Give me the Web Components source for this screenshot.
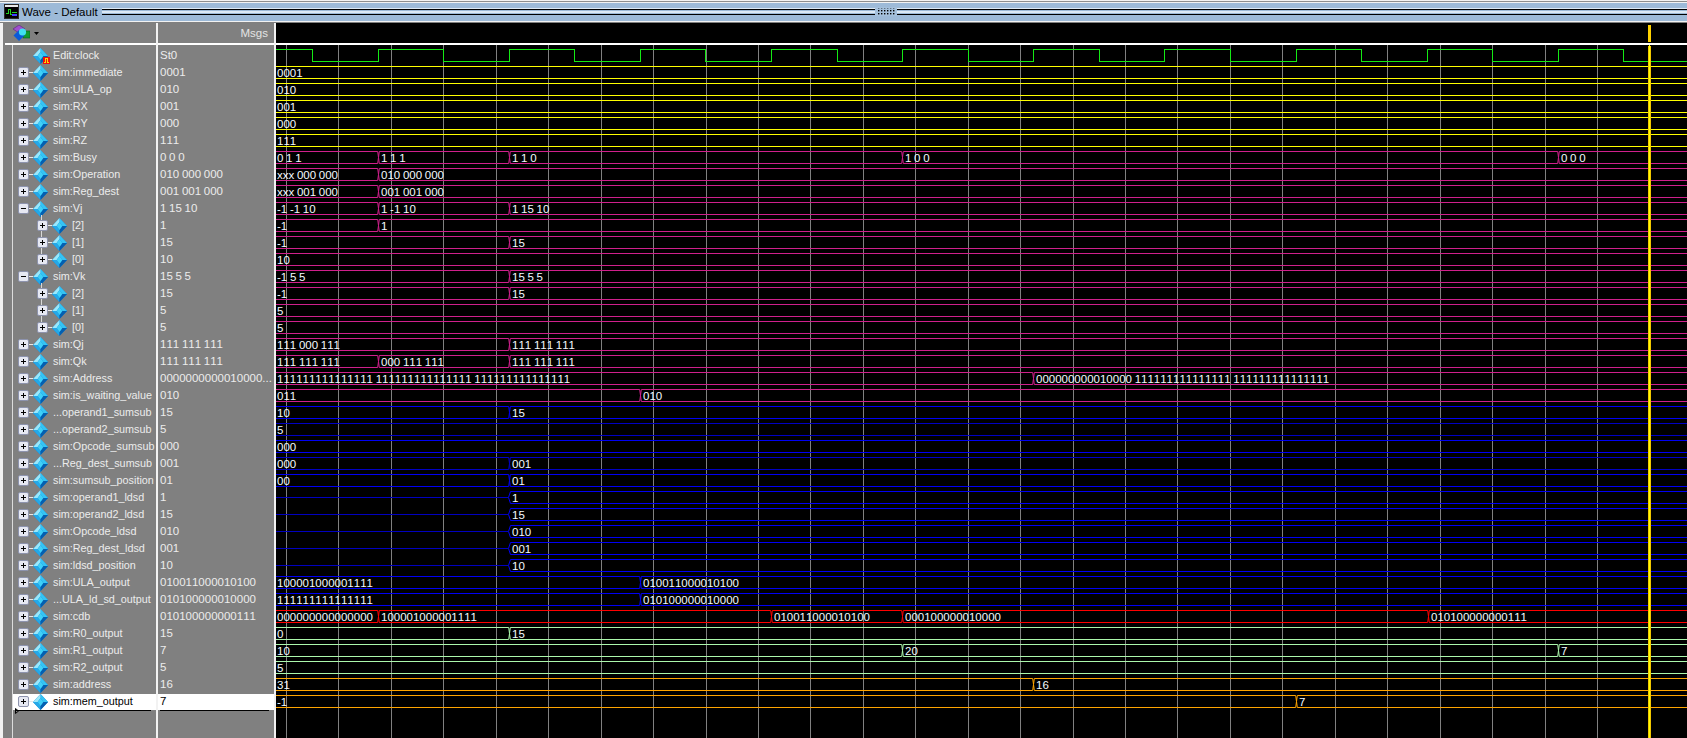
<!DOCTYPE html>
<html>
<head>
<meta charset="utf-8">
<title>Wave - Default</title>
<style>
html, body { margin: 0; height: 738px; overflow: hidden; background: #000; }
body { font: 11.5px "Liberation Sans", Arial, sans-serif; font-kerning: none; }
</style>
</head>
<body>
<wave-window></wave-window>

<script>
const GEM = `<svg class="gem" width="15" height="16" viewBox="0 0 16 16" preserveAspectRatio="none">
  <polygon points="8,0 16,8 8,16 0,8" fill="#0a7fd0"/>
  <polygon points="8,0 16,8 11,8 8,4" fill="#35c4f4"/>
  <polygon points="8,0 8,4 5,8 0,8" fill="#9be8fb"/>
  <polygon points="0,8 5,8 8,12 8,16" fill="#25a8e8"/>
  <polygon points="16,8 11,8 8,12 8,16" fill="#045fb0"/>
  <polygon points="8,4 11,8 8,12 5,8" fill="#3fd0f8"/>
</svg>`;

const titleTemplate = document.createElement('template');
titleTemplate.innerHTML = `
<style>
:host {
  display: flex;
  align-items: center;
  height: 23px;
  box-sizing: border-box;
  border-top: 1px solid #f2f2f2;
  border-bottom: 1px solid #808080;
  background: linear-gradient(#8e8e8e 1px, #f2f2f2 1px, #f2f2f2 2px, #9dbad8 2px, #9dbad8 20px, #f2f2f2 20px);
  padding-left: 4px;
  color: #000;
  font: 11.5px "Liberation Sans", Arial, sans-serif;
}
svg.icon { flex: none; margin-right: 3px; }
span { flex: none; width: 80px; white-space: nowrap; }
.stripes {
  flex: 1;
  height: 7px;
  margin-top: -1px;
  display: flex;
  justify-content: center;
  background: linear-gradient(#dce9f5 1px, #000 1px, #000 2px, #9dbad8 2px, #9dbad8 3px, #dce9f5 3px, #dce9f5 5px, #9dbad8 5px, #9dbad8 6px, #000 6px);
}
.grip { margin-left: -17px; }
</style>
<svg class="icon" width="15" height="15" viewBox="0 0 15 15" shape-rendering="crispEdges">
  <rect width="15" height="15" fill="#2a2a2a"/>
  <rect x="1" y="1" width="13" height="2" fill="#e8e8e8"/>
  <rect x="1" y="3" width="13" height="11" fill="#000"/>
  <path d="M2 9h2V5h2v5h2" fill="none" stroke="#20d020"/>
  <path d="M8 8h5" stroke="#20d020"/>
  <path d="M8 11h5" stroke="#4040ff" stroke-width="2"/>
</svg>
<span><slot></slot></span>
<div class="stripes">
  <svg class="grip" width="22" height="9" viewBox="0 0 22 9" style="margin-top:-1px">
    <defs><pattern id="d" width="3" height="3" patternUnits="userSpaceOnUse"><rect width="1.4" height="1.4" fill="#000"/></pattern></defs>
    <rect width="22" height="9" fill="#a4c0dc"/>
    <rect x="2" y="1" width="19" height="8" fill="url(#d)"/>
  </svg>
</div>`;

customElements.define('title-bar', class extends HTMLElement {
    connectedCallback() {
        this.attachShadow({ mode: 'open' }).appendChild(titleTemplate.content.cloneNode(true));
    }
});

customElements.define('signal-name', class extends HTMLElement {
    connectedCallback() {
        const kind = this.getAttribute('kind') || 'closed';
        const box = kind === 'leaf' ? '' : `
          <svg class="box" width="11" height="11" viewBox="0 0 11 11" shape-rendering="crispEdges">
            <rect x=".5" y=".5" width="10" height="10" rx="1.5" fill="#e6e8f2" stroke="#8d93ad" shape-rendering="auto"/>
            <path d="M3 5.5h5" stroke="#000"/>
            ${kind === 'open' ? '' : '<path d="M5.5 3v5" stroke="#000"/>'}
          </svg><i></i>`;
        this.attachShadow({ mode: 'open' }).innerHTML = `
<style>
:host {
  display: flex;
  align-items: center;
  position: relative;
  height: 17px;
  padding-left: 5px;
  color: #ececec;
  font-size: 10.8px;
  white-space: nowrap;
}
:host([child]) { padding-left: 24px; }
:host([kind=leaf]) { padding-left: 20px; }
:host([selected]) { background: linear-gradient(#808080 1px, #fff 1px); color: #000; }
i { width: 4px; height: 1px; background: #e8e8e8; flex: none; }
.box, .gem { flex: none; }
.gem { margin-right: 5px; }
b { font: inherit; flex: none; position: relative; top: -1px; }
:host([child])::before {
  content: "";
  position: absolute;
  left: 28px;
  top: -2px;
  height: 19px;
  width: 1px;
  background: #d8d8d8;
}
:host([last])::before { height: 10px; }
.box { position: relative; }
.badge { position: absolute; left: 30px; top: 10px; }
</style>
${box}${GEM}<b><slot></slot></b>
${kind === 'leaf' ? `<svg class="badge" width="7" height="7" viewBox="0 0 7 7" shape-rendering="crispEdges"><rect width="7" height="7" rx="1" fill="#f01010"/><path d="M1 5.5h1.5v-4h2v4h1.5" fill="none" stroke="#ffe000"/></svg>` : ''}`;
    }
});

customElements.define('signal-value', class extends HTMLElement {
    connectedCallback() {
        this.attachShadow({ mode: 'open' }).innerHTML = `
<style>
:host {
  display: block;
  height: 17px;
  line-height: 16px;
  padding-left: 2px;
  color: #ececec;
  white-space: nowrap;
  word-spacing: -.5px;
}
:host([selected]) { background: linear-gradient(#808080 1px, #fff 1px); color: #000; }
</style><slot></slot>`;
    }
});

// one bus of the wave pane, segments given as "x|text;x|text", * = high impedance
const WAVE_LEFT = 276;
customElements.define('signal-trace', class extends HTMLElement {
    connectedCallback() {
        const color = this.getAttribute('color');
        const parts = this.getAttribute('segs').split(';').map((s) => s.split('|'));
        const segs = parts.map(([x, text], i) => {
            const start = i === 0 ? WAVE_LEFT : Number(x) - 1;
            const next = parts[i + 1] ? Number(parts[i + 1][0]) - 1 : 1687;
            const z = text === '*';
            const fromZ = i > 0 && parts[i - 1][1] === '*';
            const join = i === 0 ? '' : `<svg width="3" height="13" viewBox="0 0 3 13"><path d="${fromZ
                ? 'M3 .5H2.5L.5 6.5L2.5 12.5H3'
                : 'M0 .5H.7L1.5 6.5L.7 12.5H0M3 .5H2.3L1.5 6.5L2.3 12.5H3'}" fill="none" stroke="currentColor"/></svg>`;
            return `<div class="seg" style="width:${next - start}px">${join}<div class="${z ? 'z' : 'body'}">${z ? '' : text}</div></div>`;
        }).join('');
        this.attachShadow({ mode: 'open' }).innerHTML = `
<style>
:host {
  display: flex;
  height: 17px;
  padding-top: 2px;
  box-sizing: border-box;
  color: ${color};
}
.seg { display: flex; height: 13px; flex: none; }
svg { flex: none; }
.body {
  flex: 1;
  height: 13px;
  box-sizing: border-box;
  border-top: 1px solid;
  border-bottom: 1px solid;
  padding-left: 1px;
  font-size: 11.5px;
  line-height: 12px;
  word-spacing: -.5px;
  white-space: nowrap;
  -webkit-text-fill-color: #f4fbff;
}
.seg:first-child .body { padding-left: 2px; }
.z { flex: 1; height: 13px; background: linear-gradient(#0000c0, #0000c0) center / 100% 1px no-repeat; }
</style>${segs}`;
    }
});

customElements.define('clock-trace', class extends HTMLElement {
    connectedCallback() {
        let d = 'M0 2.5H36';
        [378, 509, 640, 771, 902, 1033, 1164, 1296, 1427, 1558].forEach((x, i) => {
            const rise = x - WAVE_LEFT;
            const falls = [443, 574, 705, 837, 968, 1099, 1230, 1361, 1492, 1623];
            d += `V14.5H${rise}V2.5H${falls[i] - WAVE_LEFT}`;
        });
        d += 'V14.5H1411';
        this.attachShadow({ mode: 'open' }).innerHTML = `
<style>:host { display: block; height: 17px; } svg { display: block; }</style>
<svg width="1411" height="17" shape-rendering="crispEdges"><path d="${d}" fill="none" stroke="#14ea14"/></svg>`;
    }
});

// gridlines stay under the traces, so they are absolute with a lower z-index
customElements.define('wave-grid', class extends HTMLElement {
    connectedCallback() {
        let lines = '';
        for (let n = 0; n < 26; n++) {
            const x = Math.round(286 + 52.44 * n) - WAVE_LEFT + 0.5;
            lines += `<path d="M${x} 0V694"/>`;
        }
        this.attachShadow({ mode: 'open' }).innerHTML = `
<style>:host { position: absolute; left: 0; top: 22px; z-index: 0; } svg { display: block; }</style>
<svg width="1411" height="694" fill="none" stroke="#808080" shape-rendering="crispEdges">${lines}</svg>`;
    }
});

customElements.define('wave-cursor', class extends HTMLElement {
    connectedCallback() {
        this.attachShadow({ mode: 'open' }).innerHTML = `
<style>
:host { position: absolute; left: 1372px; top: 0; bottom: 0; width: 3px; z-index: 2; }
.head { position: absolute; left: 0; top: 2px; width: 3px; height: 17px; background: #ffd200; }
.edge { position: absolute; top: 23px; bottom: 0; width: 1px; background: #f2c800; }
.mid { position: absolute; left: 1px; top: 22px; bottom: 0; width: 1px; background: #ffff00; mix-blend-mode: difference; }
</style>
<div class="head"></div>
<div class="edge" style="left:0"></div>
<div class="mid"></div>
<div class="edge" style="left:2px"></div>`;
    }
});

const Y = '#ffff00', P = '#d0208c', B = '#0000f4', D = '#0000c4', R = '#ff0000', G = '#acf7ac', O = '#ffa500';
const ones = '111111111111111';
const rows = [
    { n: 'Edit:clock', v: 'St0', kind: 'leaf' },
    { n: 'sim:immediate', v: '0001', c: Y, s: '277|0001' },
    { n: 'sim:ULA_op', v: '010', c: Y, s: '277|010' },
    { n: 'sim:RX', v: '001', c: Y, s: '277|001' },
    { n: 'sim:RY', v: '000', c: Y, s: '277|000' },
    { n: 'sim:RZ', v: '111', c: Y, s: '277|111' },
    { n: 'sim:Busy', v: '0 0 0', c: P, s: '277|0 1 1;378|1 1 1;509|1 1 0;902|1 0 0;1558|0 0 0' },
    { n: 'sim:Operation', v: '010 000 000', c: P, s: '277|xxx 000 000;378|010 000 000' },
    { n: 'sim:Reg_dest', v: '001 001 000', c: P, s: '277|xxx 001 000;378|001 001 000' },
    { n: 'sim:Vj', v: '1 15 10', c: P, s: '277|-1 -1 10;378|1 -1 10;509|1 15 10', kind: 'open' },
    { n: '[2]', v: '1', c: P, s: '277|-1;378|1', child: 1 },
    { n: '[1]', v: '15', c: P, s: '277|-1;509|15', child: 1 },
    { n: '[0]', v: '10', c: P, s: '277|10', child: 1, last: 1 },
    { n: 'sim:Vk', v: '15 5 5', c: P, s: '277|-1 5 5;509|15 5 5', kind: 'open' },
    { n: '[2]', v: '15', c: P, s: '277|-1;509|15', child: 1 },
    { n: '[1]', v: '5', c: P, s: '277|5', child: 1 },
    { n: '[0]', v: '5', c: P, s: '277|5', child: 1, last: 1 },
    { n: 'sim:Qj', v: '111 111 111', c: P, s: '277|111 000 111;509|111 111 111' },
    { n: 'sim:Qk', v: '111 111 111', c: P, s: '277|111 111 111;378|000 111 111;509|111 111 111' },
    { n: 'sim:Address', v: '0000000000010000...', c: P, s: `277|${ones} ${ones} ${ones};1033|000000000010000 ${ones} ${ones}` },
    { n: 'sim:is_waiting_value', v: '010', c: P, s: '277|011;640|010' },
    { n: '...operand1_sumsub', v: '15', c: B, s: '277|10;509|15' },
    { n: '...operand2_sumsub', v: '5', c: D, s: '277|5' },
    { n: 'sim:Opcode_sumsub', v: '000', c: B, s: '277|000' },
    { n: '...Reg_dest_sumsub', v: '001', c: D, s: '277|000;509|001' },
    { n: 'sim:sumsub_position', v: '01', c: B, s: '277|00;509|01' },
    { n: 'sim:operand1_ldsd', v: '1', c: B, s: '277|*;509|1' },
    { n: 'sim:operand2_ldsd', v: '15', c: B, s: '277|*;509|15' },
    { n: 'sim:Opcode_ldsd', v: '010', c: B, s: '277|*;509|010' },
    { n: 'sim:Reg_dest_ldsd', v: '001', c: B, s: '277|*;509|001' },
    { n: 'sim:ldsd_position', v: '10', c: B, s: '277|*;509|10' },
    { n: 'sim:ULA_output', v: '010011000010100', c: B, s: '277|100001000001111;640|010011000010100' },
    { n: '...ULA_ld_sd_output', v: '010100000010000', c: B, s: '277|111111111111111;640|010100000010000' },
    { n: 'sim:cdb', v: '010100000000111', c: R, s: '277|000000000000000;378|100001000001111;771|010011000010100;902|000100000010000;1428|010100000000111' },
    { n: 'sim:R0_output', v: '15', c: G, s: '277|0;509|15' },
    { n: 'sim:R1_output', v: '7', c: G, s: '277|10;902|20;1558|7' },
    { n: 'sim:R2_output', v: '5', c: G, s: '277|5' },
    { n: 'sim:address', v: '16', c: O, s: '277|31;1033|16' },
    { n: 'sim:mem_output', v: '7', c: O, s: '277|-1;1296|7', selected: 1 },
];

const windowTemplate = document.createElement('template');
windowTemplate.innerHTML = `
<style>
:host {
  display: block;
  width: 1687px;
  height: 738px;
  background: #f2f2f2;
  color: #ececec;
  font: 11.5px "Liberation Sans", Arial, sans-serif;
  font-kerning: none;
}
.panes {
  display: flex;
  height: 715px;
  padding-left: 4px;
  background: linear-gradient(90deg, #f2f2f2 3px, #808080 3px, #808080 4px, transparent 4px);
  box-sizing: border-box;
}
.col { background: #808080; flex: none; display: flex; flex-direction: column; }
.names { width: 152px; }
.values { width: 116px; margin-left: 2px; }
.head { height: 20px; flex: none; display: flex; align-items: center; box-sizing: border-box; }
.rule { height: 2px; background: #fff; flex: none; }
.names .head { padding-left: 9px; }
.names .rule { margin-left: 1px; }
.values .head { justify-content: flex-end; padding-right: 6px; color: #e4e4e4; }
.rows { padding-top: 2px; flex: 1; }
.names .rows { margin-left: 9px; box-shadow: -1px 0 0 #dcdcdc; }
.waves {
  flex: 1;
  margin-left: 2px;
  background: #000;
  position: relative;
  isolation: isolate;
  display: flex;
  flex-direction: column;
}
.waves .rows { position: relative; z-index: 1; }
.insert { height: 1px; background: #000; }
.names .insert { margin-left: 3px; width: 135px; position: relative; }
.values .insert { margin-left: 2px; width: 109px; }
.insert svg { position: absolute; left: -1px; top: -2px; }
svg { display: block; }
.arrow { margin-left: 4px; }
</style>
<title-bar>Wave - Default</title-bar>
<div class="panes">
  <div class="col names">
    <div class="head">
      <svg width="17" height="16" viewBox="0 0 17 16">
        <rect x="10" y="6" width="7" height="7" fill="#0f9a2e" stroke="#0a5c1c" stroke-width=".6"/>
        <polygon points="6,0 12,4 6,8 0,4" fill="#a050d0" stroke="#5a2080" stroke-width=".6"/>
        <polygon points="6,5 11.5,10.5 6,16 .5,10.5" fill="#0a5ad8"/>
        <circle cx="9.5" cy="7" r="3.6" fill="#3fe0f0"/>
      </svg>
      <svg class="arrow" width="5" height="3" viewBox="0 0 5 3"><polygon points="0,0 5,0 2.5,3" fill="#000"/></svg>
    </div>
    <div class="rule"></div>
    <div class="rows" id="names"></div>
  </div>
  <div class="col values">
    <div class="head">Msgs</div>
    <div class="rule"></div>
    <div class="rows" id="values"></div>
  </div>
  <div class="waves">
    <div class="head"></div>
    <div class="rule"></div>
    <wave-grid></wave-grid>
    <div class="rows" id="traces"></div>
    <wave-cursor></wave-cursor>
  </div>
</div>`;

customElements.define('wave-window', class extends HTMLElement {
    connectedCallback() {
        const elem = windowTemplate.content.cloneNode(true);
        const names = elem.querySelector('#names');
        const values = elem.querySelector('#values');
        const traces = elem.querySelector('#traces');

        rows.forEach((row) => {
            const name = document.createElement('signal-name');
            const value = document.createElement('signal-value');
            name.textContent = row.n;
            value.textContent = row.v;
            if (row.kind) name.setAttribute('kind', row.kind);
            if (row.child) name.setAttribute('child', '');
            if (row.last) name.setAttribute('last', '');
            if (row.selected) {
                name.setAttribute('selected', '');
                value.setAttribute('selected', '');
            }
            names.appendChild(name);
            values.appendChild(value);

            let trace;
            if (row.s) {
                trace = document.createElement('signal-trace');
                trace.setAttribute('color', row.c);
                trace.setAttribute('segs', row.s);
            } else {
                trace = document.createElement('clock-trace');
            }
            traces.appendChild(trace);
        });

        const mark = document.createElement('div');
        mark.className = 'insert';
        mark.innerHTML = '<svg width="4" height="6" viewBox="0 0 4 6"><polygon points=".5,.5 3.5,3 .5,5.5" fill="none" stroke="#000"/></svg>';
        names.appendChild(mark);
        const mark2 = document.createElement('div');
        mark2.className = 'insert';
        values.appendChild(mark2);

        this.attachShadow({ mode: 'open' }).appendChild(elem);
    }
});
</script>
</body>
</html>
